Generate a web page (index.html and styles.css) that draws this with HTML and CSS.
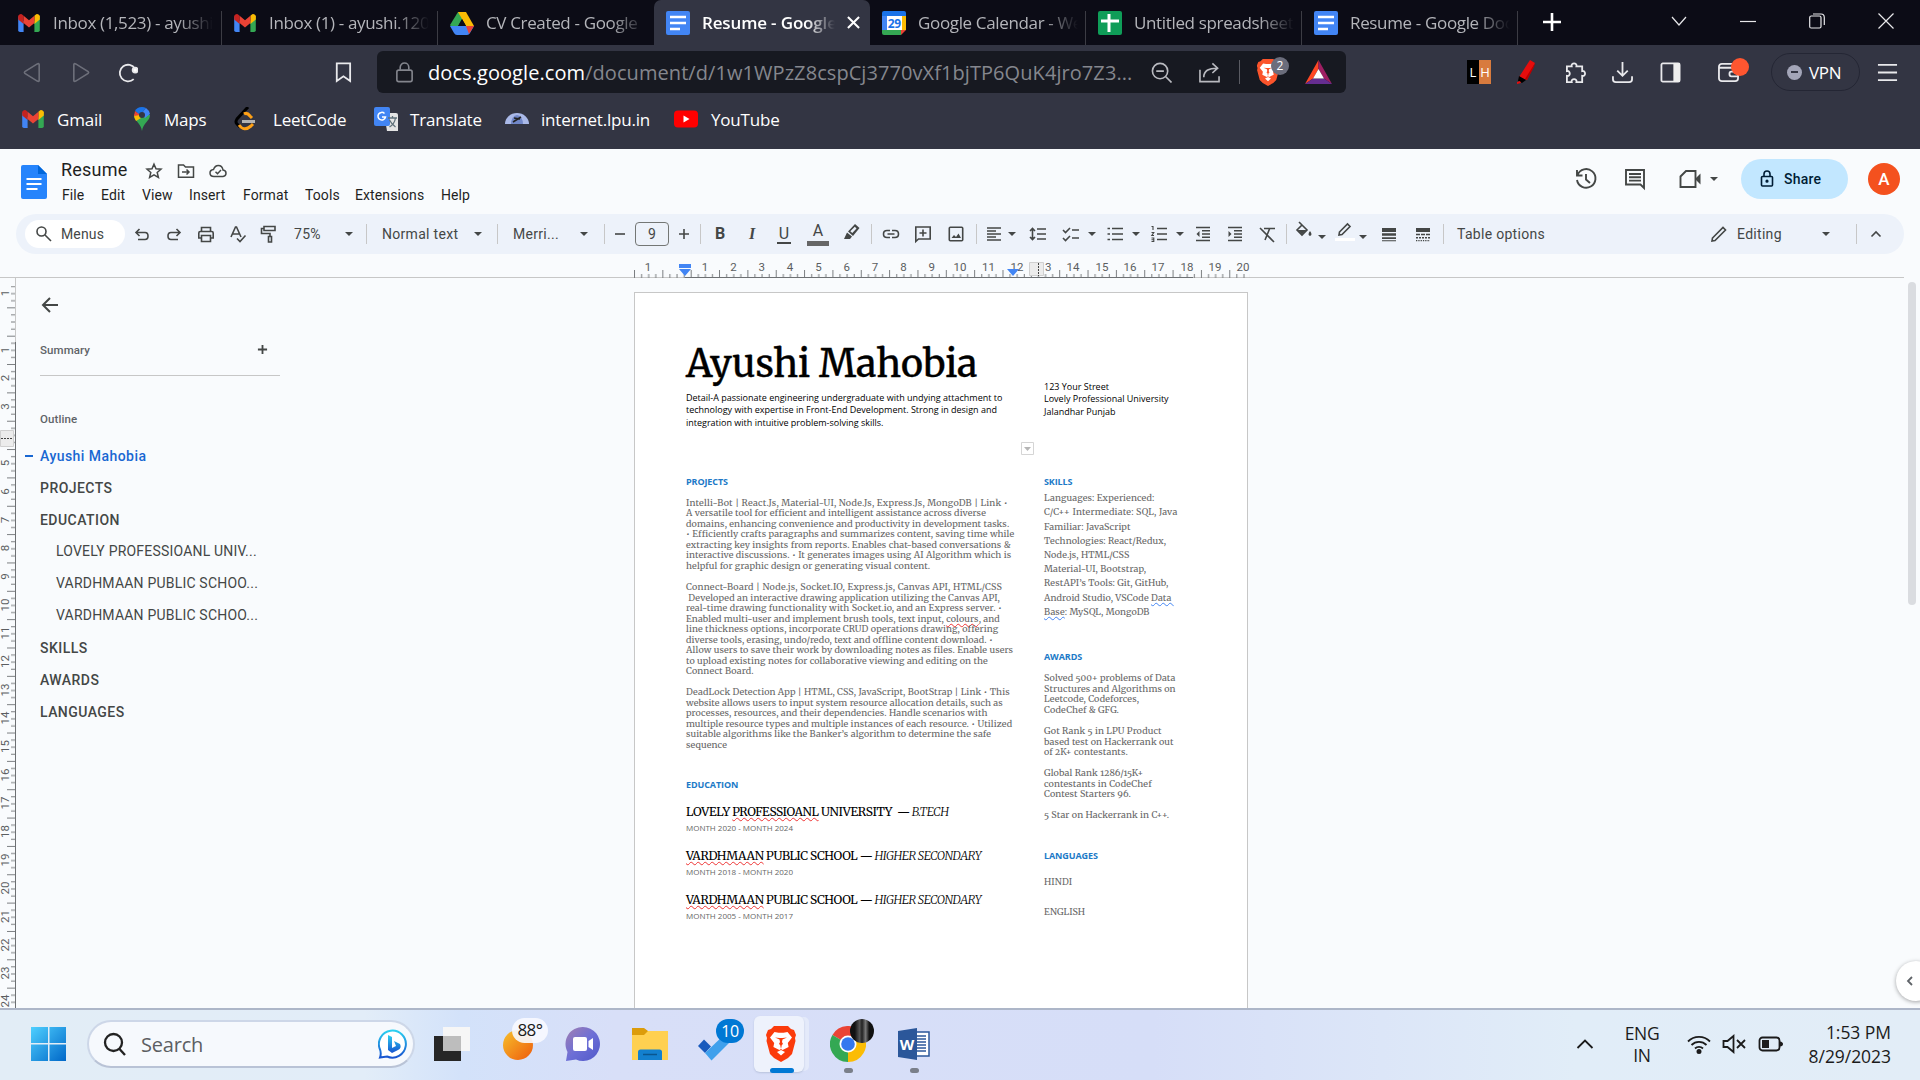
FILE: index.html
```html
<!DOCTYPE html>
<html lang="en">
<head>
<meta charset="utf-8">
<title>Resume - Google Docs</title>
<link rel="stylesheet" href="styles.css">
</head>
<body>
<svg class="defs" aria-hidden="true">
  <symbol id="gmail" viewBox="0 0 24 20"><path fill="#4285f4" d="M0 3v15a2 2 0 0 0 2 2h4V8z"/><path fill="#34a853" d="M24 3v15a2 2 0 0 1-2 2h-4V8z"/><path fill="#c5221f" d="M0 4a3 3 0 0 1 5-3l1 1v9L0 6z"/><path fill="#fbbc04" d="M24 4a3 3 0 0 0-5-3l-1 1v9l6-5z"/><path fill="#ea4335" d="M6 2l6 5 6-5v8l-6 5-6-5z"/></symbol>
  <symbol id="docs" viewBox="0 0 24 24"><rect width="24" height="24" rx="2" fill="#4285f4"/><path stroke="#fff" stroke-width="2.4" d="M4 6h16M4 12h16M4 18h10"/></symbol>
  <symbol id="caret" viewBox="0 0 10 10"><path fill="currentColor" d="M1 3h8L5 7z"/></symbol>
  <symbol id="lion" viewBox="0 0 30 36"><path d="M8 0h14l3 3 3 1 2 5-1 3 .5 3-3.500 13-4 4-7 4-7-4-4-4L.5 15 1 12 0 9l2-5 3-1z"/><path fill="#fff" d="M8.500 6l4 .8h5l4-.8 4.500 5.500-4.200 5.500.8 4-6 3-1.600-1 .8-4 1.200-1-1-2 .5-2.500 4.500-2-4.500.6h-3l-4.500-.6 4.500 2 .5 2.500-1 2 1.200 1 .8 4-1.600 1-6-3 .8-4L4 11.500zM11 26l4-2 4 2-4 3.500z"/></symbol>
</svg>

<header class="browser">
  <div class="tabs">
    <div class="tab"><svg class="fav gm"><use href="#gmail"/></svg><span>Inbox (1,523) - ayushi</span></div>
    <div class="tab"><svg class="fav gm"><use href="#gmail"/></svg><span>Inbox (1) - ayushi.120</span></div>
    <div class="tab plain"><svg class="fav" viewBox="0 0 24 24"><path fill="#34a853" d="M8 1h8L5 21 0 14z"/><path fill="#fbbc04" d="M8 1h8l8 14h-8z"/><path fill="#4285f4" d="M0 15h24l-4 7q-1 2-3 2H7q-2 0-3-2z"/><path fill="#ea4335" d="M16 15h8l-5 8z"/><path fill="#0c0c16" d="M12 8l4 7H8z"/></svg><span>CV Created - Google</span></div>
    <div class="tab active"><svg class="fav"><use href="#docs"/></svg><span>Resume - Google</span><svg class="tab-close" viewBox="0 0 14 14"><path d="M1 1l12 12M13 1L1 13" stroke="#fff" stroke-width="2.2"/></svg></div>
    <div class="tab"><svg class="fav" viewBox="0 0 24 24"><path fill="#1a73e8" d="M0 2q0-2 2-2h20q2 0 2 2v3H0z"/><path fill="#4285f4" d="M0 5h5v14H0z"/><path fill="#fbbc04" d="M19 5h5v14h-5z"/><path fill="#34a853" d="M0 19h19v5H2q-2 0-2-2z"/><path fill="#ea4335" d="M19 19h5l-5 5z"/><path fill="#fff" d="M5 5h15v14H5z"/><text x="12.3" y="16.5" text-anchor="middle" font-size="12" font-weight="700" fill="#1a73e8">29</text></svg><span>Google Calendar - We</span></div>
    <div class="tab"><svg class="fav" viewBox="0 0 24 24"><rect width="24" height="24" rx="2" fill="#0f9d58"/><path stroke="#fff" stroke-width="3" d="M11 3v18M3 10h18"/></svg><span>Untitled spreadsheet</span></div>
    <div class="tab"><svg class="fav"><use href="#docs"/></svg><span>Resume - Google Doc</span></div>
    <svg class="new-tab" viewBox="0 0 18 18"><path d="M9 0v18M0 9h18" stroke="#fff" stroke-width="2.6"/></svg>
    <div class="window-controls">
      <svg viewBox="0 0 16 16"><path d="M1 4l7 8 7-8"/></svg>
      <svg viewBox="0 0 16 16"><path d="M0 8.500h16"/></svg>
      <svg viewBox="0 0 16 16"><path d="M.7 4.500q0-1.500 1.500-1.500h8.300q1.500 0 1.500 1.500v9q0 1.500-1.500 1.500H2.200Q.7 15 .7 13.500zM4 1h8q3.300 0 3.300 3.500V12"/></svg>
      <svg viewBox="0 0 16 16"><path d="M.5.5l15 15M15.500.5l-15 15"/></svg>
    </div>
  </div>

  <div class="navbar">
    <svg class="dim" viewBox="0 0 22 22"><path d="M16 2q2-1 2 1v16q0 2-2 1L3 12q-1-1 0-2z"/></svg>
    <svg class="dim" viewBox="0 0 22 22"><path d="M6 2Q4 1 4 3v16q0 2 2 1l13-8q1-1 0-2z"/></svg>
    <svg class="reload" viewBox="0 0 22 22"><path d="M17.500 18A8.700 8.700 0 1 1 19 7"/><circle cx="19" cy="8.500" r="2.600" fill="#fff"/></svg>
    <svg class="mark" viewBox="0 0 22 22"><path d="M5 1.500h14v18.500l-7-5-7 5z"/></svg>
    <div class="omnibox">
      <svg class="lock" viewBox="0 0 22 22"><rect x="3" y="8.500" width="16" height="12" rx="2"/><path d="M6.500 8V5.500a4.500 4.500 0 0 1 9 0V8"/></svg>
      <span class="url"><b>docs.google.com</b>/document/d/1w1WPzZ8cspCj3770vXf1bjTP6QuK4jro7Z3...</span>
      <svg viewBox="0 0 22 22"><circle cx="9.500" cy="9.500" r="8"/><path d="M15.500 15.500l6 6M5.500 9.500h8"/></svg>
      <svg viewBox="0 0 22 22"><path d="M1 8v12.500h20V15M5 16c0-7 5-9.500 14-9.500M14 1.500l5.500 5-5.500 5"/></svg>
      <i class="divider"></i>
      <div class="shield"><svg viewBox="0 0 30 36"><use href="#lion"/></svg><em>2</em></div>
      <svg class="bat" viewBox="0 0 27 24"><path fill="#ff4724" d="M13.500 0v9L8 18.500 0 24z"/><path fill="#9e1f63" d="M13.500 0L27 24l-8-5.500L13.500 9z"/><path fill="#662d91" d="M0 24l8-5.500h11L27 24z"/><path fill="#fff" d="M13.500 9L19 18.500H8z"/></svg>
    </div>
    <div class="extensions">
      <div class="lh"><b>L</b><b>H</b></div>
      <svg class="pencil" viewBox="0 0 20 24"><path fill="#e60d0d" stroke="none" d="M14 0l5 3-8 17-8-3z"/><path fill="#b00" stroke="none" d="M19 3l-1 4-7 13-2-1z"/><path fill="#000" stroke="none" d="M3 16l7 4-4 3-4-2z"/><path fill="#e60d0d" stroke="none" d="M1 22l3-1 1 2-4 1z"/></svg>
      <svg viewBox="0 0 22 22"><path d="M2 4.500h5c-1-4 6-4 5 0h6v5c4-1 4 6 0 5V21h-6c1-4-6-4-5 0H2v-6.500c4 1 4-6 0-5z"/></svg>
      <svg viewBox="0 0 22 22"><path d="M11 0v14M5.500 9l5.500 5.500L16.500 9M1 15v3q0 3 3 3h14q3 0 3-3v-3"/></svg>
      <svg viewBox="0 0 22 22"><rect x="1.500" y="1.500" width="19" height="19" rx="1.500"/><path fill="#eee" stroke="none" d="M14 1h7v20h-7z"/></svg>
      <div class="wallet"><svg viewBox="0 0 22 22"><rect x="1" y="2" width="20" height="18" rx="3"/><path d="M1 6h20M21 10h-7q-2 0-2 2.500t2 2.500h7"/></svg><i></i></div>
      <div class="vpn"><i></i>VPN</div>
      <svg class="burger" viewBox="0 0 22 22"><path d="M1 3h20M1 11h20M1 19h20"/></svg>
    </div>
  </div>

  <nav class="bookmarks">
    <svg viewBox="0 0 24 24"><use href="#gmail" x="1" y="3" width="22" height="18"/></svg><span>Gmail</span>
    <svg viewBox="0 0 24 24"><path fill="#34a853" d="M12 24C11 16 4 14 4 8h16c0 6-7 8-8 16z"/><path fill="#fbbc04" d="M4 8l4-2 3 5-5 3Q4 11 4 8z"/><path fill="#1a73e8" d="M12 0Q7 0 5 4l5 4 6-7q-2-1-4-1z"/><path fill="#ea4335" d="M5 4L4 9l6-1z"/><path fill="#4285f4" d="M16 1l-5 6 4 4 5-4q-1-4-4-6z"/><circle cx="12" cy="8" r="3" fill="#333543"/></svg><span>Maps</span>
    <svg viewBox="0 0 24 24" fill="none" stroke-width="3"><path stroke="#000" d="M14 0L3 12q-2 3 0 5l3 3"/><path stroke="#ffa116" d="M10 7q3-2 6 2l2 2M5 18q5 7 12 1l2-2"/><path stroke="#b3b3b3" d="M8 14.500h13"/></svg><span>LeetCode</span>
    <svg viewBox="0 0 24 24"><path fill="#e4e4e4" d="M10 6h12q2 0 2 2v16H13z"/><rect width="16" height="19" rx="2" fill="#4285f4"/><path fill="none" stroke="#fff" stroke-width="1.500" d="M10.500 6.500a3.800 3.800 0 1 0 1 3.500H8"/><path fill="none" stroke="#5f7079" stroke-width="1.300" d="M14 11h9M18.500 9v2m3 0q-1 6-6 9m0-7q2 4 6 7"/></svg><span>Translate</span>
    <svg viewBox="0 0 24 24"><path fill="#aab9e8" d="M0 17a12 11 0 0 1 24 0z"/><path fill="#7187c8" d="M6 17a6 9 0 0 1 12 0z"/><path stroke="#222" stroke-width="1.500" d="M8 15l8-5M9 11l6 1"/></svg><span>internet.lpu.in</span>
    <svg viewBox="0 0 24 24"><rect y="3.500" width="24" height="17" rx="4" fill="red"/><path fill="#fff" d="M9.500 8.500l6 3.500-6 3.500z"/></svg><span>YouTube</span>
  </nav>
</header>

<main class="docs">
  <div class="doc-head">
    <svg class="logo" viewBox="0 0 26 34"><path fill="#2684fc" d="M2 0h15l9 9v23q0 2-2 2H2q-2 0-2-2V2q0-2 2-2z"/><path fill="#0066da" d="M17 0l9 9h-9z"/><path stroke="#fff" stroke-width="2" d="M5.500 14h15M5.500 19h15M5.500 24h11"/></svg>
    <div class="titles">
      <div class="title-row"><h1>Resume</h1>
        <svg viewBox="0 0 18 18"><path d="M9 2.200l2 4.600 5 .4-3.800 3.300 1.200 4.900L9 12.800l-4.400 2.600 1.200-4.900L2 7.200l5-.4z"/></svg>
        <svg viewBox="0 0 18 18"><path d="M1.500 3h5l2 2h8v10.300h-15zM5 10h7M9.500 7.500L12 10l-2.500 2.500"/></svg>
        <svg viewBox="0 0 18 18"><path d="M5 14.500q-4 0-4-3.500 0-3 3.500-3.500Q6 3.500 9.300 3.500q4 0 4.700 4.500 3 .3 3 3.200t-3 3.300zM6.500 9.700l2 2 3.500-3.700"/></svg>
      </div>
      <div class="menus"><span>File</span><span>Edit</span><span>View</span><span>Insert</span><span>Format</span><span>Tools</span><span>Extensions</span><span>Help</span></div>
    </div>
    <div class="head-actions">
      <svg viewBox="0 0 24 24"><path d="M3.500 8A9.300 9.300 0 1 1 3 13M3 3v5.500h5.500M12 7v5.500l4 3.500"/></svg>
      <svg viewBox="0 0 24 24"><path d="M3 3h18v18l-3.500-3.500H3zM6 7h12M6 10.300h12M6 13.600h12"/></svg>
      <svg class="meet" viewBox="0 0 24 24"><path d="M8 4h9.500v16H2.500V9.500z"/><path fill="#444746" stroke="none" d="M17 12l5.500-5.500v11z"/></svg>
      <svg class="caret"><use href="#caret"/></svg>
      <button class="share"><svg viewBox="0 0 16 18"><rect x="2.500" y="6.500" width="11" height="9.500" rx="1"/><path d="M5 6.500V4a3 3 0 0 1 6 0v2.500"/><circle cx="8" cy="11.200" r=".8"/></svg>Share</button>
      <div class="avatar">A</div>
    </div>
  </div>

  <div class="toolbar">
    <div class="menus-search"><svg viewBox="0 0 20 20"><circle cx="7.500" cy="7.500" r="4.500"/><path d="M11 11l6 6"/></svg>Menus</div>
    <svg viewBox="0 0 20 20"><path d="M7.500 5L4 8.500 7.500 12M4.500 8.500H13q3 0 3 3.500t-3 3.500H6"/></svg>
    <svg viewBox="0 0 20 20"><path d="M12.500 5L16 8.500 12.500 12M15.500 8.500H7q-3 0-3 3.500t3 3.500h7"/></svg>
    <svg viewBox="0 0 20 20"><path d="M5.500 7V3.500h9V7M5.500 14H2.800V9q0-1.500 1.500-1.500h11.400q1.500 0 1.500 1.500v5h-2.700M5.500 11.500h9v6h-9z"/></svg>
    <svg viewBox="0 0 20 20"><path d="M3 13L7.500 3h1L13 13M4.500 10h7M9 14.500l3 3 5.500-6"/></svg>
    <svg class="paint" viewBox="0 0 20 20"><path d="M5 2.500h11v4H5zM5 4.500H2.500V9.500H11v3M9.500 12.500h3v5.500h-3z"/></svg>
    <span>75%</span><svg class="caret"><use href="#caret"/></svg><i></i>
    <span>Normal text</span><svg class="caret"><use href="#caret"/></svg><i></i>
    <span>Merri...</span><svg class="caret"><use href="#caret"/></svg><i></i>
    <svg viewBox="0 0 20 20"><path d="M5 10h10"/></svg>
    <span class="size">9</span>
    <svg viewBox="0 0 20 20"><path d="M5 10h10M10 5v10"/></svg><i></i>
    <strong class="g">B</strong><strong class="g ital">I</strong><span class="g under">U</span><span class="g color">A</span>
    <svg viewBox="0 0 20 20"><path fill="#444746" stroke="none" fill-rule="evenodd" d="M14 0l4.500 4-6.500 8-5-4.500zM13.800 2.800L9.300 7.200l2 1.800 4.200-4.600zM6 8.500l5 4-2 2.500H3z"/></svg><i></i>
    <svg viewBox="0 0 20 20"><path d="M9 6.500H6q-3.500 0-3.500 3.500T6 13.500h3M11 6.500h3q3.500 0 3.500 3.500T14 13.500h-3M6.500 10h7"/></svg>
    <svg viewBox="0 0 20 20"><path d="M2.800 3h14.400v12H5.500l-2.700 2.500zM10 5.500v7M6.500 9h7"/></svg>
    <svg viewBox="0 0 20 20"><rect x="3.300" y="3.300" width="13.400" height="13.400" rx="1"/><path fill="#444746" stroke="none" d="M5.500 14l2.500-3 2 2 2.500-3.500 2.500 4.500z"/></svg><i></i>
    <svg viewBox="0 0 20 20"><path d="M3 4h14M3 7h9M3 10h14M3 13h9M3 16h14"/></svg><svg class="caret"><use href="#caret"/></svg>
    <svg viewBox="0 0 20 20"><path d="M9 5h9M9 10h9M9 15h9M4.500 5v10M2 7l2.500-2.500L7 7M2 13l2.500 2.500L7 13"/></svg>
    <svg viewBox="0 0 20 20"><path d="M11 6h7M11 14h7M2 6l2.500 2.500L9 4M2 14l2.500 2.500L9 12"/></svg><svg class="caret"><use href="#caret"/></svg>
    <svg viewBox="0 0 20 20"><path d="M7 4.500h11M7 10h11M7 15.500h11M2.500 4.500h2.500M2.500 10h2.500M2.500 15.500h2.500"/></svg><svg class="caret"><use href="#caret"/></svg>
    <svg viewBox="0 0 20 20"><path d="M8 4.500h10M8 10h10M8 15.500h10"/><path stroke-width="1.100" d="M2.500 2.500H4V6M2.500 8.500h2.300l-2 3h2.200M2.500 14h2.300v3.500H2.500m0-1.700h2.300"/></svg><svg class="caret"><use href="#caret"/></svg>
    <svg viewBox="0 0 20 20"><path d="M3 3.500h14M9 6.700h8M9 10h8M9 13.300h8M3 16.500h14"/><path fill="#444746" stroke="none" d="M6.500 7v6l-3-3z"/></svg>
    <svg viewBox="0 0 20 20"><path d="M3 3.500h14M9 6.700h8M9 10h8M9 13.300h8M3 16.500h14"/><path fill="#444746" stroke="none" d="M3.500 7v6l3-3z"/></svg>
    <svg viewBox="0 0 20 20"><path d="M7 4.500h11M12.500 5L8 16M3 4l14 14"/></svg><i></i>
    <svg class="raise" viewBox="0 0 20 20"><path d="M5 1l8 8-5 5-5-5 5-5"/><path fill="#444746" stroke="none" d="M3.500 9h9L8 13.500zM16 10q3 4 0 5-3-1 0-5z"/></svg><svg class="caret drop"><use href="#caret"/></svg>
    <svg class="raise" viewBox="0 0 20 20"><path d="M4.500 11l8-8 2.500 2.500-8 8-3 .5z"/><path stroke="#fff" stroke-width="3" d="M0 18.500h20"/></svg><svg class="caret drop"><use href="#caret"/></svg>
    <svg viewBox="0 0 20 20"><path fill="#444746" stroke="none" d="M3 4h14v4H3zM3 9.300h14v2.500H3zM3 13.200h14V15H3zM3 16.300h14v1H3z"/></svg>
    <svg viewBox="0 0 20 20"><path fill="#444746" stroke="none" d="M3 4h14v4H3z"/><path stroke-dasharray="4 1" d="M3 10.500h14"/><path stroke-dasharray="2 1" d="M3 13.700h14"/><path stroke-width="1.300" stroke-dasharray="1.300 1" d="M3 16.700h14"/></svg><i></i>
    <span>Table options</span>
    <svg viewBox="0 0 20 20"><path d="M3.500 14L14 3.500l2.500 2.500L6 16.500l-3 .5z"/></svg>
    <span>Editing</span><svg class="caret"><use href="#caret"/></svg><i></i>
    <svg viewBox="0 0 20 20"><path d="M5.500 12.500L10 8l4.500 4.500"/></svg>
  </div>

  <div class="hruler">
    <svg width="640" height="22" viewBox="0 0 640 22">
      <defs><pattern id="h" width="28.346" height="22" patternUnits="userSpaceOnUse"><path d="M.5 13v9M7.600 17v5M14.700 17v5M21.800 17v5" stroke="#7a7d80"/></pattern></defs>
      <rect width="616" height="21" fill="url(#h)"/>
      <path d="M51 20.500h508" stroke="#6d7073"/>
      <g class="nums" text-anchor="middle"><text x="14" y="14">1</text><text x="71" y="14">1</text><text x="99.400" y="14">2</text><text x="127.700" y="14">3</text><text x="156" y="14">4</text><text x="184.400" y="14">5</text><text x="212.700" y="14">6</text><text x="241" y="14">7</text><text x="269.400" y="14">8</text><text x="297.700" y="14">9</text><text x="326" y="14">10</text><text x="354.500" y="14">11</text><text x="383" y="14">12</text><text x="411" y="14">13</text><text x="439" y="14">14</text><text x="468" y="14">15</text><text x="496" y="14">16</text><text x="524" y="14">17</text><text x="553" y="14">18</text><text x="581" y="14">19</text><text x="609" y="14">20</text></g>
      <path fill="#4285f4" d="M45 11h12V7H45zM45 12h12l-6 7zM373 12h12l-6 7z"/>
      <path fill="#ececec" stroke="#d0d0d0" d="M395.500 5.500h14v13h-14z"/><path d="M404.500 6v13" stroke="#444" stroke-dasharray="2 1"/>
    </svg>
  </div>

  <div class="workspace">
    <svg class="vruler" width="16" height="731" viewBox="0 0 16 731">
      <defs><pattern id="v" y="1" width="16" height="28.346" patternUnits="userSpaceOnUse"><path d="M7 .5h9M11 7.600h5M11 14.700h5M11 21.800h5" stroke="#7a7d80"/></pattern></defs>
      <rect y="8" width="16" height="723" fill="url(#v)"/>
      <path d="M15.500 0v64" stroke="#c7c7c7"/><path d="M15.500 64v667" stroke="#6d7073"/>
      <g class="nums" text-anchor="middle"><text transform="translate(9 15)rotate(-90)">1</text><text transform="translate(9 72)rotate(-90)">1</text><text transform="translate(9 100)rotate(-90)">2</text><text transform="translate(9 128.500)rotate(-90)">3</text><text transform="translate(9 185)rotate(-90)">5</text><text transform="translate(9 213.500)rotate(-90)">6</text><text transform="translate(9 242)rotate(-90)">7</text><text transform="translate(9 270)rotate(-90)">8</text><text transform="translate(9 298.500)rotate(-90)">9</text><text transform="translate(9 327)rotate(-90)">10</text><text transform="translate(9 355)rotate(-90)">11</text><text transform="translate(9 383.500)rotate(-90)">12</text><text transform="translate(9 412)rotate(-90)">13</text><text transform="translate(9 440)rotate(-90)">14</text><text transform="translate(9 468.500)rotate(-90)">15</text><text transform="translate(9 497)rotate(-90)">16</text><text transform="translate(9 525)rotate(-90)">17</text><text transform="translate(9 553.500)rotate(-90)">18</text><text transform="translate(9 582)rotate(-90)">19</text><text transform="translate(9 610)rotate(-90)">20</text><text transform="translate(9 638.500)rotate(-90)">21</text><text transform="translate(9 667)rotate(-90)">22</text><text transform="translate(9 695)rotate(-90)">23</text><text transform="translate(9 723)rotate(-90)">24</text></g>
      <path fill="#ececec" stroke="#d0d0d0" d="M.5 152.500h13v16H.5z"/><path d="M1 160.500h12" stroke="#444" stroke-dasharray="2 1"/>
    </svg>

    <aside class="outline">
      <svg class="back" viewBox="0 0 18 18"><path d="M17 9H2M9 2L2 9l7 7"/></svg>
      <div class="summary">Summary<svg viewBox="0 0 12 12"><path d="M1 6h10M6 1v10"/></svg></div>
      <h2>Outline</h2>
      <ul>
        <li class="current">Ayushi Mahobia</li><li>PROJECTS</li><li>EDUCATION</li>
        <li class="sub">LOVELY PROFESSIOANL UNIV...</li><li class="sub">VARDHMAAN PUBLIC SCHOO...</li><li class="sub">VARDHMAAN PUBLIC SCHOO...</li>
        <li>SKILLS</li><li>AWARDS</li><li>LANGUAGES</li>
      </ul>
    </aside>

    <article class="page">
      <section class="left">
        <h1>Ayushi Mahobia</h1>
        <p class="intro">Detail-A passionate engineering undergraduate with undying attachment to<br>technology with expertise in Front-End Development. Strong in design and<br>integration with intuitive problem-solving skills.</p>
        <h2 class="first">PROJECTS</h2>
        <p><span class="lead">Intelli-Bot | React.Js, Material-UI, Node.Js, Express.Js, MongoDB | Link •</span><br>A versatile tool for efficient and intelligent assistance across diverse<br>domains, enhancing convenience and productivity in development tasks.<br>• Efficiently crafts paragraphs and summarizes content, saving time while<br>extracting key insights from reports. Enables chat-based conversations &amp;<br>interactive discussions. • It generates images using AI Algorithm which is<br>helpful for graphic design or generating visual content.</p>
        <p><span class="lead">Connect-Board | Node.js, Socket.IO, Express.js, Canvas API, HTML/CSS</span><br>&nbsp;Developed an interactive drawing application utilizing the Canvas API,<br>real-time drawing functionality with Socket.io, and an Express server. •<br>Enabled multi-user and implement brush tools, text input, <u>colours</u>, and<br>line thickness options, incorporate CRUD operations drawing, offering<br>diverse tools, erasing, undo/redo, text and offline content download. •<br>Allow users to save their work by downloading notes as files. Enable users<br>to upload existing notes for collaborative viewing and editing on the<br>Connect Board.</p>
        <p>DeadLock Detection App | HTML, CSS, JavaScript, BootStrap | Link • This<br>website allows users to input system resource allocation details, such as<br>processes, resources, and their dependencies. Handle scenarios with<br>multiple resource types and multiple instances of each resource. • Utilized<br>suitable algorithms like the Banker’s algorithm to determine the safe<br>sequence</p>
        <h2 class="edu">EDUCATION</h2>
        <h3>LOVELY <u>PROFESSIOANL</u> UNIVERSITY&nbsp; <em>— B.TECH</em></h3>
        <small>MONTH 2020 - MONTH 2024</small>
        <h3><u>VARDHMAAN</u> PUBLIC SCHOOL <em>— HIGHER SECONDARY</em></h3>
        <small>MONTH 2018 - MONTH 2020</small>
        <h3><u>VARDHMAAN</u> PUBLIC SCHOOL <em>— HIGHER SECONDARY</em></h3>
        <small>MONTH 2005 - MONTH 2017</small>
      </section>
      <section class="right">
        <p class="intro">123 Your Street<br>Lovely Professional University<br>Jalandhar Punjab</p>
        <h2 class="first">SKILLS</h2>
        <p class="skills">Languages: Experienced:<br><span class="lead">C/C++ Intermediate: SQL, Java</span><br>Familiar: JavaScript<br>Technologies: React/Redux,<br>Node.js, HTML/CSS<br>Material-UI, Bootstrap,<br>RestAPI’s Tools: Git, GitHub,<br>Android Studio, VSCode <u>Data&nbsp;</u><br><u>Base</u>: MySQL, MongoDB</p>
        <h2 class="awards">AWARDS</h2>
        <p>Solved 500+ problems of Data<br>Structures and Algorithms on<br>Leetcode, Codeforces,<br>CodeChef &amp; GFG.</p>
        <p>Got Rank 5 in LPU Product<br>based test on Hackerrank out<br>of 2K+ contestants.</p>
        <p>Global Rank 1286/15K+<br>contestants in CodeChef<br>Contest Starters 96.</p>
        <p>5 Star on Hackerrank in C++.</p>
        <h2 class="langs">LANGUAGES</h2>
        <p class="hindi">HINDI</p>
        <p class="english">ENGLISH</p>
      </section>
      <svg class="cell-menu" viewBox="0 0 14 14"><path fill="#fff" stroke="#d5d5d5" d="M.5.5h12v12H.5z"/><path fill="#b5b5b5" d="M3 5h7l-3.500 4z"/></svg>
    </article>
    <div class="scroll-thumb"></div>
    <div class="explore"><svg viewBox="0 0 10 12"><path d="M7 2L3 6l4 4"/></svg></div>
  </div>
</main>

<footer class="taskbar">
  <svg class="win" viewBox="0 0 36 36"><defs><linearGradient id="w" x2="1" y2="1"><stop stop-color="#4fd0ff"/><stop offset="1" stop-color="#0067c8"/></linearGradient></defs><path fill="url(#w)" d="M0 1h17v16H0zM18.500 1H35v16H18.500zM0 18.500h17V35H0zM18.500 18.500H35V35H18.500z"/></svg>
  <div class="search"><svg viewBox="0 0 24 24"><circle cx="10.500" cy="10.500" r="8.500"/><path d="M16.500 17l5.500 6"/></svg><span>Search</span>
    <svg class="bing" viewBox="0 0 30 30"><defs><linearGradient id="b" x2="0" y2="1"><stop stop-color="#2bd0f0"/><stop offset="1" stop-color="#1753d0"/></linearGradient></defs><path fill="#fff" stroke="url(#b)" stroke-width="2" d="M2 28.500q1.500-4 0-8A13.500 13.500 0 1 1 9 27.500z"/><path fill="url(#b)" d="M10 6l4 2v11l4-2-2-5 6 3q2 4-2 6l-6 3-4-3z"/></svg>
  </div>
  <svg class="taskview" viewBox="0 0 36 36"><path fill="#262626" d="M0 10h27v25H0z"/><path fill="#f6f6f6" d="M9 1h27v24H9z"/><path fill="#bdbdbd" d="M9 10h18v15H9z"/></svg>
  <div class="badged weather"><svg viewBox="0 0 36 36"><defs><linearGradient id="s" x2="1" y2="1"><stop stop-color="#f7c12c"/><stop offset="1" stop-color="#ee5b0c"/></linearGradient></defs><circle cx="18" cy="19" r="15" fill="url(#s)"/></svg><b>88°</b></div>
  <svg class="chat" viewBox="0 0 36 36"><defs><linearGradient id="c" x2="1" y2="1"><stop stop-color="#a37fb0"/><stop offset=".5" stop-color="#6d6fd6"/><stop offset="1" stop-color="#5059c9"/></linearGradient></defs><path fill="url(#c)" d="M18 1a17 17 0 1 1-7 32.500L1 35l1.500-9A17 17 0 0 1 18 1z"/><rect x="8" y="11" width="14" height="14" rx="2" fill="#fff"/><path fill="#fff" d="M23.500 15l4.500-3v12l-4.500-3z"/></svg>
  <svg class="files" viewBox="0 0 36 36"><path fill="#dc9c0b" d="M0 2h12l4 3h20v8H0z"/><path fill="#ffd050" d="M0 9h12l4-4h20v29H0z"/><path fill="#1380cf" d="M6 34V26q0-2.500 2.500-2.500h19q2.500 0 2.500 2.500v8z"/><path stroke="#0a568f" stroke-width="1.500" d="M11 28.500h14"/></svg>
  <div class="badged todo"><svg viewBox="0 0 36 36"><path fill="#185abd" d="M1 20l6-6.500 7 7-6 6.500z"/><path fill="#3fa0ec" d="M8 27l6.500 7.500L35 14l-7-6z"/></svg><b>10</b></div>
  <div class="running"><svg viewBox="0 0 30 36"><use href="#lion"/></svg></div>
  <div class="badged chrome"><svg viewBox="0 0 36 36"><path fill="#ea4335" d="M18 18L2.400 9A18 18 0 0 1 33.600 9z"/><path fill="#34a853" d="M18 18v18A18 18 0 0 1 2.400 9z"/><path fill="#fbbc04" d="M18 18l15.600-9A18 18 0 0 1 18 36z"/><path fill="#ea4335" d="M18 9h15.600L18 14z"/><circle cx="18" cy="18" r="8.500" fill="#fff"/><circle cx="18" cy="18" r="6.800" fill="#3478ef"/></svg><b></b></div>
  <div class="word"><svg viewBox="0 0 32 32"><rect x="15" y="4" width="16" height="24" fill="#fff" stroke="#2b579a" stroke-width="1.500"/><path stroke="#2b579a" stroke-width="1.300" d="M19 8h9M19 11h9M19 14h9M19 17h9M19 20h9M19 23h9"/><path fill="#2b579a" d="M0 3l19-3v32L0 29z"/><text x="9" y="21.500" text-anchor="middle" font-size="15" font-weight="700" fill="#fff">W</text></svg></div>
  <div class="tray">
    <svg viewBox="0 0 18 18"><path d="M1.500 13L9 5.500l7.500 7.500"/></svg>
    <div class="lang">ENG<br>IN</div>
    <svg class="wide" viewBox="0 0 26 22"><path d="M2 8.500a15.500 15.500 0 0 1 22 0M5.500 12a10.600 10.600 0 0 1 15 0M9 15.500a5.700 5.700 0 0 1 8 0"/><circle cx="13" cy="18.500" r="1.600" fill="#1b1b1b"/></svg>
    <svg class="wide mute" viewBox="0 0 26 22"><path d="M1.500 8h4l6-5v16l-6-5h-4zM15 7l8 8M23 7l-8 8"/></svg>
    <svg class="wide" viewBox="0 0 26 22"><rect x="1.500" y="4.500" width="20" height="13" rx="3"/><path fill="#1b1b1b" stroke="none" d="M4 7h7v8H4zM22 8.500q3 .5 3 2.500t-3 2.500z"/></svg>
    <div class="clock">1:53 PM<br>8/29/2023</div>
  </div>
</footer>
</body>
</html>
```
FILE: styles.css
```css
* { box-sizing: border-box; }
body {
  margin: 0; width: 1920px; height: 1080px; overflow: hidden;
  display: flex; flex-direction: column;
  font-family: "Open Sans", "Noto Sans", sans-serif;
}
h1, h2, h3, p, ul { margin: 0; padding: 0; font-weight: 400; }
svg { display: block; flex: none; }
.defs { position: absolute; width: 0; height: 0; }

/* ---- browser chrome ---- */
.browser { height: 149px; background: #333543; color: #fff; flex: none; }
.tabs { display: flex; height: 45px; background: #0c0c16; color: #b4b5ba; font-size: 17px; letter-spacing: -.35px; padding-left: 6px; }
.tab { width: 216px; display: flex; align-items: center; padding-left: 12px; position: relative; }
.tab:not(.active):not(.plain)::after { content: ""; position: absolute; right: 0; top: 11px; bottom: 0; width: 1px; background: #3c3c44; }
.tab span { margin-left: 12px; width: 160px; white-space: nowrap; overflow: hidden; -webkit-mask-image: linear-gradient(90deg, #000 78%, transparent); mask-image: linear-gradient(90deg, #000 78%, transparent); }
.tab .fav { width: 24px; height: 24px; }
.tab .fav.gm { width: 22px; height: 18px; margin-right: 1px; }
.tab.active { background: #333543; color: #fff; font-weight: 600; border-radius: 7px 7px 0 0; letter-spacing: -.15px; }
.tab.active span { width: 133px; }
.tab-close { width: 13px; height: 13px; margin-left: 12px; }
.new-tab { width: 18px; height: 18px; margin: 13px 0 0 25px; }
.window-controls { display: flex; gap: 53px; margin: 13px 0 0 110px; }
.window-controls svg { width: 16px; height: 16px; fill: none; stroke: #e8e8ea; stroke-width: 1.2; }

.navbar { display: grid; grid-template-columns: 48px 47px 215px 45px 969px 1fr; align-items: center; height: 55px; padding: 0 0 1px 22px; }
.navbar svg { width: 21px; height: 21px; fill: none; stroke: #e9e9ec; stroke-width: 1.9; }
.navbar .dim { stroke: #6d6f7a; stroke-width: 1.7; }
.navbar .mark { justify-self: start; }
.omnibox { height: 42px; border-radius: 6px; background: #171921; display: flex; align-items: center; padding-left: 17px; }
.omnibox svg { stroke: #b9bac0; stroke-width: 1.7; }
.omnibox .lock { stroke: #83858d; }
.url { width: 723px; margin-left: 13px; color: #85878e; font-size: 20px; letter-spacing: .07px; white-space: nowrap; }
.url b { color: #fff; font-weight: 400; }
.url + svg + svg { margin-left: 27px; }
.divider { width: 1px; height: 24px; background: #5a5b63; margin-left: 19px; }
.shield { position: relative; margin-left: 16px; width: 49px; }
.omnibox .shield svg { width: 24px; height: 27px; fill: #fb542b; stroke: none; }
.shield em { position: absolute; left: 15px; top: -2px; width: 18px; height: 18px; border-radius: 9px; background: #6b6d7c; font: 12px/18px "Open Sans", sans-serif; text-align: center; }
.omnibox .bat { width: 27px; height: 24px; stroke: none; }
.extensions { display: grid; grid-template-columns: 49px 49px 47px 48px 58px 53px 106px 22px; padding-left: 121px; align-items: center; height: 42px; }
.lh { display: flex; width: 24px; height: 24px; background: linear-gradient(90deg, #000 50%, #d87b3e 50%); font-size: 13px; line-height: 24px; }
.lh b { flex: 1; text-align: center; font-weight: 400; }
.navbar .pencil { width: 20px; height: 24px; }
.wallet { position: relative; }
.wallet i { position: absolute; left: 13px; top: -4px; width: 18px; height: 18px; border-radius: 50%; background: #ff5630; }
.vpn { width: 89px; height: 38px; border: 1.5px solid #242634; border-radius: 19px; display: flex; align-items: center; gap: 7px; padding-left: 15px; font-size: 17px; letter-spacing: -.3px; }
.vpn i { width: 15px; height: 15px; border-radius: 50%; background: linear-gradient(#333543, #333543) center/7px 2px no-repeat #a3a5b8; }

.bookmarks { display: grid; grid-template-columns: 36px 73px 34px 70px 39px 101px 36px 95px 36px 133px 37px 1fr; align-items: center; height: 38px; padding-left: 21px; font-size: 17px; letter-spacing: -.2px; }
.bookmarks svg { width: 24px; height: 24px; }

/* ---- docs header ---- */
.docs { height: 859px; background: #f9fbfd; color: #444746; font-family: Roboto, "Liberation Sans", sans-serif; position: relative; }
.doc-head { display: flex; height: 65px; padding-left: 21px; }
.logo { width: 26px; height: 34px; margin-top: 16px; }
.titles { margin-left: 14px; width: 1513px; padding-top: 10px; }
.title-row { display: flex; align-items: center; height: 24px; }
.title-row h1 { font-size: 18px; line-height: 22px; padding-bottom: 2px; width: 84px; color: #1f1f1f; letter-spacing: .2px; }
.title-row svg { width: 18px; height: 18px; margin-right: 14px; fill: none; stroke: #444746; stroke-width: 1.5; }
.menus { display: grid; grid-template-columns: 39px 41px 47px 54px 62px 50px 86px 1fr; font-size: 14px; line-height: 22px; color: #1f1f1f; padding-left: 1px; letter-spacing: .1px; margin-top: 1px; }
.head-actions { display: flex; align-items: center; height: 60px; }
.head-actions svg { width: 24px; height: 24px; fill: none; stroke: #444746; stroke-width: 1.9; margin-right: 25px; }
.head-actions svg.meet { margin: 0 7px 0 6px; }
.head-actions svg.caret { width: 10px; height: 10px; margin: 0; stroke: none; }
.share { margin-left: 22px; width: 107px; height: 40px; border: 0; border-radius: 20px; background: #c2e7ff; color: #001d35; font: 500 14px Roboto, sans-serif; letter-spacing: .2px; display: flex; align-items: center; padding: 0 0 0 18px; }
.head-actions .share svg { width: 16px; height: 18px; margin: 0 9px 0 0; stroke: #001d35; stroke-width: 1.6; }
.avatar { margin-left: 20px; width: 32px; height: 32px; border-radius: 50%; background: #f4511e; color: #fff; font: 500 17px/33px Roboto, sans-serif; text-align: center; }

.toolbar { margin: 0 16px; height: 40px; border-radius: 20px; background: #edf2fa; padding-left: 9px; display: grid; align-items: center; white-space: nowrap; font-size: 14px; letter-spacing: .3px;
  grid-template-columns: 107px 32px 32px 32px 30px 36px 50px 22px 16px 91px 24px 16px 66px 25px 6px 25px 39px 26px 10px 32px 32px 33px 34px 30px 10px 32px 33px 30px 8px 23px 21px 33px 26px 18px 26px 18px 26px 18px 32px 32px 29px 8px 23px 18px 23px 21px 34px 30px 14px 252px 28px 84px 35px 10px 20px; }
.toolbar svg { width: 20px; height: 20px; fill: none; stroke: #444746; stroke-width: 1.6; }
.toolbar svg.paint { position: relative; left: 1px; }
.toolbar svg.caret { width: 10px; height: 10px; stroke: none; }
.toolbar svg.raise { position: relative; top: -3px; }
.toolbar svg.drop { position: relative; top: 3px; }
.toolbar i { width: 1px; height: 20px; background: #c7c7c7; }
.menus-search { width: 100px; height: 28px; border-radius: 14px; background: #fff; display: flex; align-items: center; gap: 7px; padding-left: 9px; letter-spacing: .15px; }
.toolbar .g { width: 20px; text-align: center; font-size: 16px; line-height: 18px; letter-spacing: 0; }
.ital { font-family: "Liberation Serif", serif; font-style: italic; font-size: 18px; }
.under { border-bottom: 2px solid #444746; height: 19px; width: 14px !important; margin-left: 3px; }
.color { border-bottom: 5px solid #666; height: 24px; width: 22px !important; }
.size { width: 34px; height: 24px; border: 1.3px solid #747775; border-radius: 4px; text-align: center; line-height: 22px; }

/* ---- rulers ---- */
.hruler { height: 24px; padding: 3px 0 0 634px; margin-right: 16px; border-bottom: 1px solid #c7c7c7; }
.hruler svg { margin-bottom: -1px; }
.nums text { font-size: 11.5px; fill: #5b5e61; }
.workspace { height: 730px; display: flex; position: relative; overflow: hidden; }
.vruler { flex: none; }

/* ---- outline ---- */
.outline { width: 618px; padding: 18px 0 0 24px; flex: none; }
.outline .back { width: 18px; height: 18px; margin-left: 1px; fill: none; stroke: #444746; stroke-width: 2; }
.summary { display: flex; justify-content: space-between; align-items: center; width: 240px; margin-top: 12px; height: 50px; padding: 0 12px 2px 0; border-bottom: 1px solid #c7c7c7; font-size: 11.5px; font-weight: 500; color: #5f6368; letter-spacing: .1px; }
.summary svg { width: 11px; height: 11px; stroke: #444746; stroke-width: 2; }
.outline h2 { font-size: 11.5px; font-weight: 500; color: #5f6368; letter-spacing: .1px; line-height: 16px; margin-top: 35px; }
.outline ul { list-style: none; margin-top: 13px; font-size: 14px; font-weight: 500; }
.outline li { height: 32px; line-height: 32px; letter-spacing: .45px; position: relative; }
.outline li.sub { padding-left: 16px; font-weight: 400; letter-spacing: .2px; line-height: 31px; }
.current { color: #1967d2; }
.current::before { content: ""; position: absolute; left: -15px; top: 15px; width: 8px; height: 2px; background: #1967d2; }

/* ---- resume page ---- */
.page { position: relative; width: 614px; height: 792px; margin-top: 14px; border: 1px solid #c7c7c7; background: #fff; display: grid; grid-template-columns: 358px 1fr; padding-left: 51px; flex: none; white-space: nowrap; color: #666; font-family: Merriweather, "Noto Serif", "DejaVu Serif Condensed", "DejaVu Serif", serif; }
.page p { font-size: 9px; line-height: 10.53px; margin-top: 10.500px; letter-spacing: .12px; font-variant-numeric: oldstyle-nums; }
.page .lead { letter-spacing: .22px; }
.left { padding-top: 49px; }
.right { padding-top: 88px; }
.page h1 { font-size: 37.500px; line-height: 44px; color: #000; -webkit-text-stroke: .4px #000; }
.page p.intro { font-family: "Open Sans", sans-serif; font-size: 9px; line-height: 12.400px; color: #000; margin-top: 6px; letter-spacing: 0; font-variant-numeric: normal; }
.right p.intro { margin-top: 0; }
.page h2 { font-family: "Open Sans", sans-serif; font-size: 9px; font-weight: 700; line-height: 12px; color: #2079c7; margin-top: 46.300px; letter-spacing: -.1px; }
.right h2.first { margin-top: 57.300px; }
h2 + p { margin-top: 10.300px !important; }
.page p.skills { line-height: 14.220px; margin-top: 3.600px !important; }
.page h2.edu { margin-top: 28px; }
.page h2.awards { margin-top: 32px; }
.page h2.langs { margin-top: 29px; }
.page p.hindi { margin-top: 15.200px !important; }
.page p.english { margin-top: 19.500px; }
.page h3 { font-size: 12px; line-height: 16px; color: #000; margin-top: 13.700px; letter-spacing: -.38px; }
.page h3 em { font-weight: 300; letter-spacing: -.45px; }
.page small { display: block; font: 8px/12px "Open Sans", sans-serif; margin-top: 2.300px; }
.page u { text-decoration: underline wavy #e33 .8px; text-underline-offset: 1px; }
.page .skills u { text-decoration-color: #4285f4; }
.cell-menu { position: absolute; left: 386px; top: 149px; width: 14px; height: 14px; }

.scroll-thumb { position: absolute; left: 1908px; top: 4px; width: 8px; height: 323px; border-radius: 4px; background: #dadce0; }
.explore { position: absolute; left: 1896px; top: 683px; width: 40px; height: 40px; border-radius: 50%; background: #fff; box-shadow: 0 1px 4px rgba(0,0,0,.35); padding: 14px 0 0 9px; }
.explore svg { width: 10px; height: 12px; fill: none; stroke: #5f6368; stroke-width: 1.8; }

/* ---- taskbar ---- */
.taskbar { height: 72px; border-top: 2px solid #adb6c8; background: linear-gradient(90deg, #e2edf6 0, #e2edf8 19%, #d3e2fa 24%, #d8dff8 32%, #d6def8 60%, #dce6f8 72%, #e1edf8 82%, #e2edf7 100%); display: flex; align-items: center; padding: 0 0 2px 31px; color: #1b1b1b; flex: none; position: relative; }
.taskbar > svg, .badged svg { width: 36px; height: 36px; }
.search { margin-left: 20px; width: 328px; height: 48px; border: 2px solid #cdd7e8; border-bottom-color: #b9c3d6; border-radius: 24px; background: #f6f9fd; display: flex; align-items: center; padding: 0 5px 0 14px; font-size: 20px; letter-spacing: -.2px; color: #5c5e62; }
.search span { margin-left: 14px; flex: 1; }
.search svg { width: 24px; height: 24px; fill: none; stroke: #222; stroke-width: 2.3; }
.search .bing { width: 30px; height: 30px; stroke: none; }
.taskbar .taskview { margin-left: 19px; }
.badged { position: relative; }
.badged b { position: absolute; font-weight: 400; text-align: center; }
.weather { margin-left: 30px; }
.weather b { left: 12px; top: -8px; width: 36px; height: 25px; border-radius: 13px; background: rgba(248,250,255,.9); font-size: 17px; line-height: 24px; letter-spacing: -.5px; }
.taskbar .chat { margin-left: 29px; }
.taskbar .files { margin-left: 31px; }
.todo { margin-left: 29px; }
.todo b { left: 19px; top: -7px; width: 28px; height: 24px; border-radius: 12px; background: #0078d4; color: #fff; font-size: 16px; line-height: 24px; letter-spacing: -.4px; }
.running { position: relative; margin-left: 21px; width: 50px; height: 56px; border-radius: 6px; background: #eef2fc; box-shadow: 0 1px 2px #b8c2dc, 6px 0 0 -1px #e4eafa; padding: 10px 8px 10px 12px; }
.running svg { width: 30px; height: 36px; fill: #fb3b0c; }
.running::after, .chrome::after, .word::after { content: ""; position: absolute; left: 16px; bottom: -1px; width: 24px; height: 5px; border-radius: 3px; background: #0078d4; }
.chrome { margin-left: 26px; }
.chrome b { left: 20px; top: -7px; width: 24px; height: 24px; border-radius: 50%; background: linear-gradient(90deg, #111 20%, #555 40%, #222 50%, #777 65%, #111 80%); }
.chrome::after, .word::after { left: 14px; bottom: -11px; width: 9px; background: #7a7f8a; }
.word { position: relative; margin-left: 32px; width: 32px; }
.word svg { width: 32px; height: 32px; }
.word::after { bottom: -13px; left: 12px; }
.tray { display: flex; align-items: center; margin-left: auto; padding-right: 29px; font-size: 17.500px; line-height: 24px; letter-spacing: -.05px; }
.tray svg { width: 18px; height: 18px; fill: none; stroke: #1b1b1b; stroke-width: 1.8; }
.tray svg.wide { width: 26px; height: 22px; margin-right: 10px; }
.lang { width: 50px; margin: 0 19px 0 23px; text-align: center; line-height: 22px; letter-spacing: -.3px; }
.clock { text-align: right; margin-left: 9px; width: 88px; }
```
